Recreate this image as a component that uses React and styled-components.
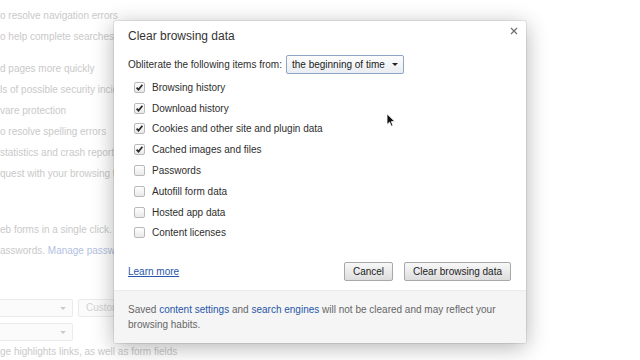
import React from 'react';
import styled, { createGlobalStyle } from 'styled-components';

const GlobalStyle = createGlobalStyle`
  html, body {
    margin: 0;
    padding: 0;
    background: #ffffff;
  }
  body {
    font-family: 'Liberation Sans', Helvetica, Arial, sans-serif;
  }
`;

const Page = styled.div`
  position: relative;
  width: 640px;
  height: 360px;
  overflow: hidden;
  background: #ffffff;
`;

// faded settings page behind the dialog
const Backdrop = styled.div`
  display: flex;
  flex-direction: column;
  padding-top: 5px;
  color: #c9c9c9;
  font-size: 10px;
  white-space: nowrap;
`;

const BgGroup = styled.div`
  display: flex;
  flex-direction: column;
  margin-top: ${props => props.$gap || 0}px;
`;

const BgLine = styled.div`
  height: ${props => props.$h || 21}px;
  line-height: ${props => props.$h || 21}px;
`;

const BgLink = styled.span`
  color: #b3bfdf;
`;

const BgControls = styled.div`
  display: flex;
  gap: 5px;
  margin-top: ${props => props.$gap || 0}px;
`;

const BgSelect = styled.div`
  position: relative;
  box-sizing: border-box;
  width: 73px;
  height: 18px;
  border: 1px solid #ebebeb;
  border-left: none;
  border-radius: 0 2px 2px 0;
  background: #fbfbfb;

  &::after {
    content: '';
    position: absolute;
    right: 6px;
    top: 7px;
    border-left: 3px solid transparent;
    border-right: 3px solid transparent;
    border-top: 3px solid #c9c9c9;
  }
`;

const BgButton = styled.div`
  box-sizing: border-box;
  height: 18px;
  padding: 0 7px;
  line-height: 16px;
  border: 1px solid #ebebeb;
  border-radius: 2px;
  background: #fbfbfb;
  color: #d2d2d2;
`;

const Dialog = styled.div`
  position: absolute;
  left: 114px;
  top: 21px;
  width: 412px;
  height: 322px;
  box-sizing: border-box;
  display: flex;
  flex-direction: column;
  background: #ffffff;
  border-radius: 2px;
  box-shadow: 0 0 0 1px rgba(0, 0, 0, 0.08), 0 4px 22px rgba(0, 0, 0, 0.3);
  overflow: hidden;
  color: #2e2e2e;
  font-size: 10px;
`;

const Main = styled.div`
  flex: 1;
  display: flex;
  flex-direction: column;
  padding: 7px 15px 9px 14px;
`;

const Title = styled.h1`
  margin: 0;
  height: 16px;
  line-height: 16px;
  font-size: 12px;
  font-weight: normal;
  color: #333;
`;

const CloseButton = styled.button`
  position: absolute;
  right: 8px;
  top: 6px;
  width: 8px;
  height: 8px;
  padding: 0;
  border: none;
  background: transparent;
  display: flex;
`;

const TimeRow = styled.div`
  display: flex;
  align-items: center;
  gap: 4px;
  margin-top: 11px;
  height: 19px;
`;

const Select = styled.div`
  display: flex;
  align-items: center;
  gap: 7px;
  box-sizing: border-box;
  height: 19px;
  padding: 0 5px 0 5px;
  border: 1px solid #8ea6c6;
  border-radius: 2px;
  background: linear-gradient(#fdfdfd, #e9ecf1);
  color: #1a1a1a;
`;

const Arrow = styled.span`
  width: 0;
  height: 0;
  border-left: 3.5px solid transparent;
  border-right: 3.5px solid transparent;
  border-top: 3.5px solid #222;
`;

const CheckList = styled.div`
  display: flex;
  flex-direction: column;
  margin-top: 3px;
`;

const CheckRow = styled.label`
  display: flex;
  align-items: center;
  gap: 7px;
  height: 20.8px;
  padding-left: 6px;
`;

const Box = styled.span`
  box-sizing: border-box;
  width: 11px;
  height: 11px;
  border: 1px solid #b9b9b9;
  border-radius: 2px;
  background: linear-gradient(#fefefe, #e9e9e9);
  display: flex;
  align-items: center;
  justify-content: center;
`;

const Actions = styled.div`
  margin-top: auto;
  display: flex;
  align-items: center;
  gap: 11px;
  height: 19px;
`;

const Link = styled.a`
  color: #2856a8;
  text-decoration: ${props => (props.$underline ? 'underline' : 'none')};
  cursor: pointer;
`;

const LearnMore = styled(Link)`
  margin-right: auto;
`;

const Button = styled.button`
  box-sizing: border-box;
  height: 19px;
  padding: 0 8px;
  border: 1px solid #a8a8a8;
  border-radius: 2px;
  background: linear-gradient(#f8f8f8, #dddddd);
  font-family: inherit;
  font-size: 10px;
  color: #222;
`;

const Footer = styled.div`
  height: 53px;
  box-sizing: border-box;
  padding: 11px 14px 0 14px;
  background: #f5f5f5;
  border-top: 1px solid #ebebeb;
  color: #666;
  line-height: 15px;
`;

const Cursor = styled.svg`
  position: absolute;
  left: 386px;
  top: 113px;
`;

const items = [
  ['Browsing history', true],
  ['Download history', true],
  ['Cookies and other site and plugin data', true],
  ['Cached images and files', true],
  ['Passwords', false],
  ['Autofill form data', false],
  ['Hosted app data', false],
  ['Content licenses', false],
];

const CheckBox = ({ checked }) => (
  <Box>
    {checked && (
      <svg width="9" height="9" viewBox="0 0 9 9">
        <path d="M1.6 4.6 L3.5 6.6 L7.4 1.8" fill="none" stroke="#2a2a2a" strokeWidth="1.7" />
      </svg>
    )}
  </Box>
);

export default function App() {
  return (
    <Page>
      <GlobalStyle />
      <Backdrop>
        <BgGroup>
          <BgLine>o resolve navigation errors</BgLine>
          <BgLine>o help complete searches</BgLine>
        </BgGroup>
        <BgGroup $gap={11}>
          <BgLine>d pages more quickly</BgLine>
          <BgLine>ls of possible security incidents</BgLine>
          <BgLine>vare protection</BgLine>
          <BgLine>o resolve spelling errors</BgLine>
          <BgLine>statistics and crash reports</BgLine>
          <BgLine>quest with your browsing traffic</BgLine>
        </BgGroup>
        <BgGroup $gap={35}>
          <BgLine>eb forms in a single click.</BgLine>
          <BgLine>
            asswords. <BgLink>Manage passwords</BgLink>
          </BgLine>
        </BgGroup>
        <BgControls $gap={38}>
          <BgSelect />
          <BgButton>Customize fonts...</BgButton>
        </BgControls>
        <BgControls $gap={6}>
          <BgSelect />
        </BgControls>
        <BgGroup $gap={4}>
          <BgLine $h={14}>ge highlights links, as well as form fields</BgLine>
        </BgGroup>
      </Backdrop>

      <Dialog>
        <CloseButton aria-label="Close">
          <svg width="8" height="8" viewBox="0 0 8 8">
            <path d="M1 1 L7 7 M7 1 L1 7" stroke="#6f6f6f" strokeWidth="1.2" />
          </svg>
        </CloseButton>
        <Main>
          <Title>Clear browsing data</Title>
          <TimeRow>
            <span>Obliterate the following items from:</span>
            <Select>
              <span>the beginning of time</span>
              <Arrow />
            </Select>
          </TimeRow>
          <CheckList>
            {items.map(([label, checked]) => (
              <CheckRow key={label}>
                <CheckBox checked={checked} />
                <span>{label}</span>
              </CheckRow>
            ))}
          </CheckList>
          <Actions>
            <LearnMore $underline>Learn more</LearnMore>
            <Button>Cancel</Button>
            <Button>Clear browsing data</Button>
          </Actions>
        </Main>
        <Footer>
          Saved <Link>content settings</Link> and <Link>search engines</Link> will not be cleared and may reflect your
          <br />
          browsing habits.
        </Footer>
      </Dialog>

      <Cursor width="10" height="14" viewBox="0 0 10 14">
        <path d="M1 0.8 L1 11.5 L3.6 9.2 L5.4 13.2 L7 12.5 L5.3 8.6 L8.8 8.6 Z" fill="#111" stroke="#fff" strokeWidth="0.8" />
      </Cursor>
    </Page>
  );
}
